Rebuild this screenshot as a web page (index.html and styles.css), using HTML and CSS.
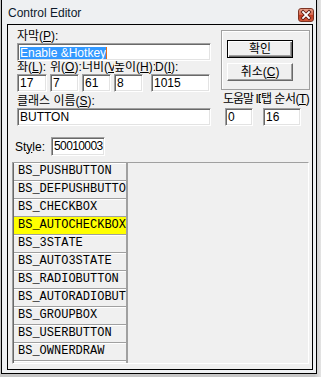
FILE: index.html
```html
<!DOCTYPE html>
<html lang="ko">
<head>
  <meta charset="UTF-8" />
  <title>Control Editor</title>
  <link rel="stylesheet" href="styles.css">
</head>
<body>
  <div class="window">
    <div class="titlebar">
      <span class="title">Control Editor</span>
      <span class="close">
        <svg width="14" height="12" viewBox="0 0 14 12">
          <path d="M4 3 L10 9 M10 3 L4 9" stroke="#5a1a10" stroke-width="3.4" stroke-linecap="square"/>
          <path d="M4 3 L10 9 M10 3 L4 9" stroke="#fff" stroke-width="1.8" stroke-linecap="square"/>
        </svg>
      </span>
    </div>

    <div class="client">
      <div class="top">
        <div class="fields">
          <div class="label first">자막(<u>P</u>):</div>
          <div class="edit wide"><span class="sel">Enable &amp;Hotkey</span><span class="caret"></span></div>

          <div class="pos-labels">
            <span class="pl w33">좌(<u>L</u>):</span>
            <span class="pl w32">위(<u>O</u>):</span>
            <span class="pl w32">너비(<u>V</u>)</span>
            <span class="pl w41">높이(<u>H</u>):</span>
            <span class="pl">D(<u>I</u>):</span>
          </div>
          <div class="pos-edits">
            <div class="edit e-x">17</div>
            <div class="edit e-y">7</div>
            <div class="edit e-w">61</div>
            <div class="edit e-h">8</div>
            <div class="edit e-id">1015</div>
          </div>

          <div class="label cls">클래스 이름(<u>S</u>):</div>
          <div class="edit wide">BUTTON</div>
        </div>

        <div class="side">
          <div class="groupbox">
            <div class="btn default">확인</div>
            <div class="btn">취소(<u>C</u>)</div>
          </div>
          <div class="side-labels">
            <span class="help-label">도움말 ID</span>
            <span class="tab-label">탭 순서(<u>T</u>)</span>
          </div>
          <div class="side-edits">
            <div class="edit e-help">0</div>
            <div class="edit e-tab">16</div>
          </div>
        </div>
      </div>

      <div class="style-row">
        <span class="style-label">St<u>y</u>le:</span>
        <div class="edit e-style">50010003</div>
      </div>

      <div class="list-frame">
        <ul class="list">
          <li>BS_PUSHBUTTON</li>
          <li>BS_DEFPUSHBUTTON</li>
          <li>BS_CHECKBOX</li>
          <li class="selected">BS_AUTOCHECKBOX</li>
          <li>BS_3STATE</li>
          <li>BS_AUTO3STATE</li>
          <li>BS_RADIOBUTTON</li>
          <li>BS_AUTORADIOBUTTON</li>
          <li>BS_GROUPBOX</li>
          <li>BS_USERBUTTON</li>
          <li>BS_OWNERDRAW</li>
          <li>BS_LEFTTEXT</li>
        </ul>
        <div class="preview"></div>
      </div>
    </div>
  </div>
</body>
</html>
```

FILE: styles.css
```css
html, body {
  margin: 0;
  padding: 0;
}

body {
  width: 321px;
  height: 377px;
  background: linear-gradient(90deg, #c6c6c6 98%, #e4e4e4);
  font-family: "Liberation Sans", "Noto Sans CJK KR", sans-serif;
  font-size: 12px;
  color: #000;
  overflow: hidden;
}

u {
  text-decoration: underline;
  text-underline-offset: 1px;
}

.window {
  box-sizing: border-box;
  width: 316px;
  height: 374px;
  margin-left: 1px;
  padding: 0 3px 3px 5px;
  background: #eef0f2;
  border: 1px solid #000;
  border-top: none;
}

.titlebar {
  height: 24px;
  display: flex;
  align-items: flex-start;
}

.title {
  font-size: 12px;
  line-height: 14px;
  padding: 6px 0 0 1px;
  color: #0c1a2c;
}

.close {
  margin: 8px -1px 0 auto;
  width: 16px;
  height: 14px;
  box-sizing: border-box;
  border: 1px solid #7c3424;
  border-radius: 3px;
  background: linear-gradient(#eaa28c, #d6644a 50%, #c0391f 51%, #d45a3c);
  display: flex;
  align-items: center;
  justify-content: center;
}

.close svg {
  display: block;
}

.client {
  box-sizing: border-box;
  width: 306px;
  height: 346px;
  border: 1px solid #000;
  background: #f0f0f0;
  overflow: hidden;
}

.top {
  display: flex;
}

.fields {
  width: 194px;
  margin-left: 9px;
}

.label {
  height: 14px;
  line-height: 14px;
  white-space: nowrap;
}

.label.first {
  margin-top: 4px;
}

.label.cls {
  margin-top: 2px;
}

.edit {
  box-sizing: border-box;
  height: 18px;
  background: #fff;
  border: 1px solid;
  border-color: #a0a0a0 #fff #fff #a0a0a0;
  box-shadow: inset 1px 1px #696969, inset -1px -1px #e3e3e3;
  padding-left: 2px;
  line-height: 16px;
  white-space: nowrap;
  overflow: hidden;
}

.edit.wide {
  width: 194px;
}

.sel {
  display: inline-block;
  background: #3399ff;
  color: #fff;
  line-height: 12px;
  vertical-align: middle;
}

.caret {
  display: inline-block;
  width: 1px;
  height: 12px;
  background: #e07020;
  vertical-align: middle;
}

.pos-labels {
  display: flex;
  height: 13px;
  line-height: 13px;
}

.pl {
  white-space: nowrap;
  overflow: hidden;
  flex-shrink: 0;
}

.w33 { width: 33px; }
.w32 { width: 32px; }
.w41 { width: 41px; }

.pos-edits {
  display: flex;
}

.e-x { width: 30px; }
.e-y { width: 29px; margin-left: 3px; }
.e-w { width: 29px; margin-left: 3px; }
.e-h { width: 29px; margin-left: 3px; }
.e-id { width: 59px; margin-left: 8px; }

.side {
  margin-left: 10px;
  width: 90px;
  overflow: hidden;
}

.groupbox {
  box-sizing: border-box;
  width: 89px;
  height: 60px;
  margin-top: 5px;
  padding: 9px 0 0 5px;
  border: 1px solid #a0a0a0;
  box-shadow: inset 1px 1px #fff;
  display: flex;
  flex-direction: column;
  gap: 5px;
}

.btn {
  box-sizing: border-box;
  width: 66px;
  height: 18px;
  line-height: 16px;
  text-align: center;
  background: #f0f0f0;
  border: 1px solid;
  border-color: #fff #696969 #696969 #fff;
  box-shadow: inset -1px -1px #a0a0a0;
}

.btn.default {
  border-color: #000;
  box-shadow: inset 1px 1px #fff, inset -1px -1px #696969, inset -2px -2px #a0a0a0;
}

.side-labels {
  display: flex;
  height: 14px;
  line-height: 14px;
  margin-top: 2px;
  white-space: nowrap;
}

.help-label {
  margin-left: 2px;
  width: 38px;
  letter-spacing: -1px;
  overflow: hidden;
  flex-shrink: 0;
}

.tab-label {
  flex-shrink: 0;
  letter-spacing: -0.5px;
}

.side-edits {
  display: flex;
  margin-top: 2px;
}

.e-help { width: 28px; margin-left: 4px; }
.e-tab { width: 38px; margin-left: 10px; }

.style-row {
  display: flex;
  align-items: center;
  margin-top: 11px;
  padding-left: 7px;
}

.style-label {
  width: 36px;
  line-height: 14px;
}

.edit.e-style {
  width: 54px;
  height: 19px;
  line-height: 17px;
  letter-spacing: -0.6px;
}

.list-frame {
  box-sizing: border-box;
  display: flex;
  width: 297px;
  height: 202px;
  margin: 6px 0 0 4px;
  border: 1px solid;
  border-color: #a0a0a0 #fff #fff #a0a0a0;
  box-shadow: inset -1px -1px #e3e3e3;
  overflow: hidden;
}

.list {
  list-style: none;
  margin: 0;
  padding: 0;
  width: 114px;
  flex-shrink: 0;
  border-left: 1px solid #696969;
  box-sizing: border-box;
  font-family: "Liberation Mono", monospace;
  font-size: 12px;
}

.list li {
  box-sizing: border-box;
  height: 18px;
  line-height: 17px;
  padding-left: 4px;
  border-bottom: 1px solid #a0a0a0;
  border-right: 1px solid #a0a0a0;
  box-shadow: inset 0 1px #fff;
  white-space: nowrap;
  overflow: hidden;
  background: #f0f0f0;
}

.list li.selected {
  background: #ffff00;
  box-shadow: none;
}

.preview {
  flex: 1;
  border-left: 1px solid #a0a0a0;
  background: #f0f0f0;
}
```
